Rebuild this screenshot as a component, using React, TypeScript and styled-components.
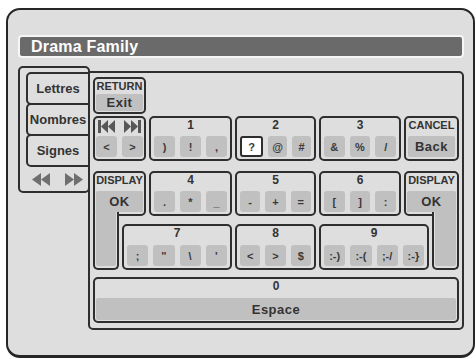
import styled, { createGlobalStyle } from "styled-components";

const GlobalStyle = createGlobalStyle`
  html, body {
    margin: 0;
    background: #ffffff;
  }
  body {
    font-family: "Liberation Sans", Arial, sans-serif;
    color: #333333;
  }
`;

const Frame = styled.div`
  box-sizing: border-box;
  width: 469px;
  height: 350px;
  margin: 8px 0 0 6px;
  padding: 25px 9px 0 10px;
  background: #dedede;
  border: 2px solid #262626;
  border-bottom-width: 3px;
  border-radius: 14px;
`;

const TitleBar = styled.div`
  box-sizing: border-box;
  height: 23px;
  padding-left: 11px;
  background: #6a6a6a;
  border: 2px solid #f6f6f6;
  border-radius: 4px;
  color: #ffffff;
  font-size: 16px;
  font-weight: bold;
  line-height: 19px;
  letter-spacing: 0.2px;
`;

const Body = styled.div`
  display: flex;
  align-items: flex-start;
  margin-top: 8px;
`;

const Sidebar = styled.div`
  box-sizing: border-box;
  width: 72px;
  height: 127px;
  padding: 4px 0 0 6px;
  border: 2px solid #2e2e2e;
  border-radius: 5px;
  display: flex;
  flex-direction: column;
`;

const Tab = styled.div<{ $active?: boolean }>`
  box-sizing: border-box;
  height: 33px;
  margin-right: -2px;
  border: 2px solid #2e2e2e;
  border-radius: 5px 0 0 5px;
  display: flex;
  align-items: center;
  justify-content: center;
  font-size: 13px;
  font-weight: bold;
  color: #333333;

  & + & {
    margin-top: -2px;
  }
`;

const Arrows = styled.div`
  flex: 1;
  display: flex;
  align-items: center;
  justify-content: center;
  gap: 15px;
  color: #6f6f6f;
`;

const Keyboard = styled.div`
  box-sizing: border-box;
  width: 376px;
  height: 259px;
  margin: 5px 0 0 -2px;
  padding: 4px 3px 0;
  border: 2px solid #2e2e2e;
  border-radius: 0 5px 5px 5px;
  display: grid;
  grid-template-columns: 26px 24px 83px 81px 82px 25px 27px;
  grid-template-rows: 37px 47px 55px 54px 53px;
  column-gap: 3px;
`;

const Cell = styled.div<{ $col: string; $row: number; $h: number; $pad?: string }>`
  grid-column: ${(p) => p.$col};
  grid-row: ${(p) => p.$row};
  align-self: end;
  height: ${(p) => p.$h}px;
  box-sizing: border-box;
  padding: ${(p) => p.$pad ?? "0 3px 2px"};
  border: 2px solid #2e2e2e;
  border-radius: 5px;
  display: flex;
  flex-direction: column;
  background: #dedede;
`;

const Stem = styled.div<{ $col: number }>`
  grid-column: ${(p) => p.$col};
  grid-row: 4;
  align-self: stretch;
  margin-top: -4px;
  box-sizing: border-box;
  padding: 0 1px 2px;
  border: 2px solid #2e2e2e;
  border-top: none;
  border-radius: 0 0 5px 5px;
  background: #dedede;
  display: flex;
`;

const StemFill = styled.div`
  flex: 1;
  background: #c0c0c0;
  border-radius: 0 0 2px 2px;
`;

const Label = styled.div<{ $size?: number }>`
  flex: 1;
  text-align: center;
  font-size: ${(p) => p.$size ?? 12}px;
  font-weight: bold;
  line-height: 14px;
  color: #333333;
  white-space: nowrap;
`;

const Pad = styled.div<{ $h: number; $open?: boolean }>`
  height: ${(p) => p.$h}px;
  flex: none;
  display: flex;
  align-items: center;
  justify-content: center;
  background: #c0c0c0;
  border-radius: ${(p) => (p.$open ? "2px 2px 0 0" : "2px")};
  font-size: 13px;
  font-weight: bold;
  letter-spacing: 0.5px;
  color: #333333;
`;

const SubRow = styled.div`
  display: flex;
  gap: 5px;
  height: 21px;
  flex: none;
`;

const SubKey = styled.div<{ $active?: boolean }>`
  flex: 1;
  box-sizing: border-box;
  display: flex;
  align-items: center;
  justify-content: center;
  background: ${(p) => (p.$active ? "#ffffff" : "#c0c0c0")};
  border: ${(p) => (p.$active ? "2px solid #2e2e2e" : "none")};
  border-radius: 3px;
  font-size: 11px;
  font-weight: bold;
  color: #3a3a3a;
  white-space: nowrap;
`;

const IconRow = styled.div`
  flex: 1;
  display: flex;
  gap: 5px;
  padding-top: 2px;
  color: #575757;
`;

const IconCell = styled.div`
  flex: 1;
  display: flex;
  justify-content: center;
`;

const SkipBack = () => (
  <svg width="17" height="13" viewBox="0 0 17 13">
    <rect x="0" y="0" width="3" height="13" fill="currentColor" />
    <polygon points="10,0 3,6.5 10,13" fill="currentColor" />
    <polygon points="17,0 10,6.5 17,13" fill="currentColor" />
  </svg>
);

const SkipNext = () => (
  <svg width="17" height="13" viewBox="0 0 17 13">
    <polygon points="0,0 7,6.5 0,13" fill="currentColor" />
    <polygon points="7,0 14,6.5 7,13" fill="currentColor" />
    <rect x="14" y="0" width="3" height="13" fill="currentColor" />
  </svg>
);

const Rewind = () => (
  <svg width="18" height="13" viewBox="0 0 18 13">
    <polygon points="9,0 0,6.5 9,13" fill="currentColor" />
    <polygon points="18,0 9,6.5 18,13" fill="currentColor" />
  </svg>
);

const Forward = () => (
  <svg width="18" height="13" viewBox="0 0 18 13">
    <polygon points="0,0 9,6.5 0,13" fill="currentColor" />
    <polygon points="9,0 18,6.5 9,13" fill="currentColor" />
  </svg>
);

type KeyProps = {
  col: string;
  row: number;
  h: number;
  digit: string;
  chars: string[];
  active?: number;
};

const CharKey = ({ col, row, h, digit, chars, active }: KeyProps) => (
  <Cell $col={col} $row={row} $h={h}>
    <Label>{digit}</Label>
    <SubRow>
      {chars.map((c, i) => (
        <SubKey key={i} $active={i === active}>
          {c}
        </SubKey>
      ))}
    </SubRow>
  </Cell>
);

const App = () => {
  return (
    <>
      <GlobalStyle />
      <Frame>
        <TitleBar>Drama Family</TitleBar>
        <Body>
          <Sidebar>
            <Tab>Lettres</Tab>
            <Tab>Nombres</Tab>
            <Tab $active>Signes</Tab>
            <Arrows>
              <Rewind />
              <Forward />
            </Arrows>
          </Sidebar>

          <Keyboard>
            <Cell $col="1 / 3" $row={1} $h={37} $pad="0 1px 1px">
              <Label $size={11}>RETURN</Label>
              <Pad $h={17}>Exit</Pad>
            </Cell>

            <Cell $col="1 / 3" $row={2} $h={45} $pad="0 1px 2px">
              <IconRow>
                <IconCell>
                  <SkipBack />
                </IconCell>
                <IconCell>
                  <SkipNext />
                </IconCell>
              </IconRow>
              <SubRow>
                <SubKey>&lt;</SubKey>
                <SubKey>&gt;</SubKey>
              </SubRow>
            </Cell>
            <CharKey col="3" row={2} h={45} digit="1" chars={[")", "!", ","]} />
            <CharKey col="4" row={2} h={45} digit="2" chars={["?", "@", "#"]} active={0} />
            <CharKey col="5" row={2} h={45} digit="3" chars={["&", "%", "/"]} />
            <Cell $col="6 / 8" $row={2} $h={45} $pad="0 2px 2px">
              <Label $size={11}>CANCEL</Label>
              <Pad $h={21}>Back</Pad>
            </Cell>

            <Cell $col="1 / 3" $row={3} $h={45} $pad="0 1px 2px">
              <Label $size={11}>DISPLAY</Label>
              <Pad $h={21} $open>OK</Pad>
            </Cell>
            <CharKey col="3" row={3} h={45} digit="4" chars={[".", "*", "_"]} />
            <CharKey col="4" row={3} h={45} digit="5" chars={["-", "+", "="]} />
            <CharKey col="5" row={3} h={45} digit="6" chars={["[", "]", ":"]} />
            <Cell $col="6 / 8" $row={3} $h={45} $pad="0 1px 2px">
              <Label $size={11}>DISPLAY</Label>
              <Pad $h={21} $open>OK</Pad>
            </Cell>

            <Stem $col={1}>
              <StemFill />
            </Stem>
            <CharKey col="2 / 4" row={4} h={46} digit="7" chars={[";", "\"", "\\", "'"]} />
            <CharKey col="4" row={4} h={46} digit="8" chars={["<", ">", "$"]} />
            <CharKey col="5 / 7" row={4} h={46} digit="9" chars={[":-)", ":-(", ";-/", ":-}"]} />
            <Stem $col={7}>
              <StemFill />
            </Stem>

            <Cell $col="1 / 8" $row={5} $h={46} $pad="0 1px 1px">
              <Label>0</Label>
              <Pad $h={22}>Espace</Pad>
            </Cell>
          </Keyboard>
        </Body>
      </Frame>
    </>
  );
};

export default App;
